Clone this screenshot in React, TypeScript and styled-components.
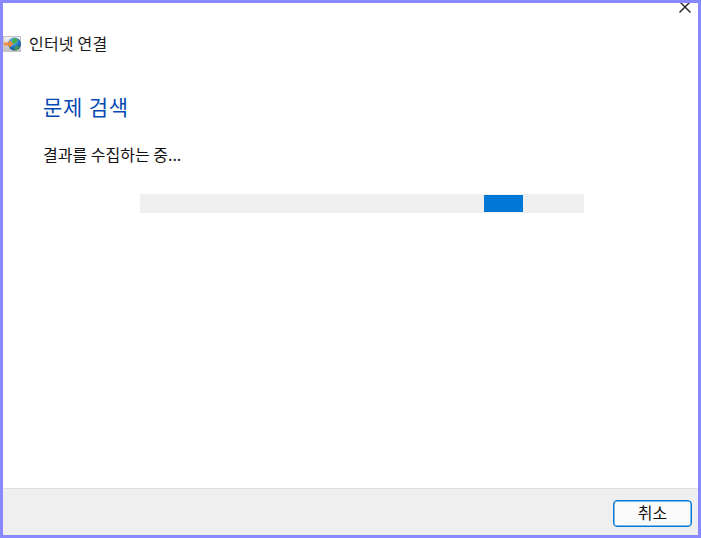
import React from "react";
import styled, { createGlobalStyle } from "styled-components";

const Global = createGlobalStyle`
  html, body { margin: 0; padding: 0; background: #fff; }
  body { font-family: "Noto Sans CJK KR", "Liberation Sans", sans-serif; }
`;

const Frame = styled.div`
  box-sizing: border-box;
  width: 701px;
  height: 538px;
  border: 3px solid #8888ff;
  background: #fff;
  display: flex;
  flex-direction: column;
  position: relative;
  overflow: hidden;
`;

const CloseGlyph = styled.svg`
  position: absolute;
  top: -3px;
  right: 6px;
  width: 14px;
  height: 14px;
`;

const Main = styled.main`
  flex: 1;
  display: flex;
  flex-direction: column;
  padding-top: 29px;
`;

const Header = styled.header`
  display: flex;
  align-items: center;
  gap: 8px;
  height: 24px;
`;

const HeaderTitle = styled.span`
  font-size: 16px;
  line-height: 24px;
  padding-bottom: 2px;
  letter-spacing: 0.2px;
  color: #1a1a1a;
`;

const Body = styled.section`
  display: flex;
  flex-direction: column;
  padding: 0 0 0 40px;
`;

const Heading = styled.h1`
  margin: 35px 0 0;
  font-size: 21px;
  font-weight: 400;
  line-height: 30px;
  color: #0649b4;
  letter-spacing: 0.8px;
`;

const Status = styled.p`
  margin: 21px 0 0;
  font-size: 16px;
  line-height: 24px;
  color: #111;
`;

const Track = styled.div`
  box-sizing: border-box;
  width: 444px;
  height: 19px;
  margin: 28px 0 0 97px;
  padding: 1px 0;
  background: #efefef;
`;

const Fill = styled.div`
  width: 39px;
  height: 17px;
  margin-left: 344px;
  background: #0078d7;
`;

const Footer = styled.footer`
  box-sizing: border-box;
  height: 47px;
  border-top: 1px solid #dfdfdf;
  background: #efefef;
  display: flex;
  justify-content: flex-end;
  align-items: flex-start;
  padding: 11px 6px 0 0;
`;

const CancelButton = styled.button`
  box-sizing: border-box;
  width: 79px;
  height: 27px;
  padding: 0 0 2px;
  border: 1px solid #0078d7;
  border-radius: 4px;
  background: #fbfbfb;
  box-shadow: inset 0 0 0 0.5px #0078d7;
  font-family: inherit;
  font-size: 16px;
  line-height: 21px;
  color: #111;
`;

const NetworkIcon = () => (
  <svg width="18" height="16" viewBox="0 0 18 16" aria-hidden="true">
    <defs>
      <radialGradient id="globe" cx="0.4" cy="0.3" r="0.8">
        <stop offset="0" stopColor="#6fc3ee" />
        <stop offset="0.6" stopColor="#1f74b8" />
        <stop offset="1" stopColor="#123f78" />
      </radialGradient>
      <linearGradient id="plate" x1="0" y1="0" x2="0" y2="1">
        <stop offset="0" stopColor="#f2f2f2" />
        <stop offset="1" stopColor="#bdbdbd" />
      </linearGradient>
    </defs>
    <rect x="0" y="0" width="18" height="16" fill="url(#plate)" />
    <rect x="0.500" y="0.500" width="17" height="15" fill="none" stroke="#c4c4c4" />
    <circle cx="11.500" cy="8" r="6.500" fill="url(#globe)" />
    <path d="M9 3.500l3-1.500 2.500 1-1 3.500-3 1.500-1.500-2z" fill="#4bb04a" />
    <path d="M11.500 11.500l3-1.500 1.500 1-2 3.500-2.500-1z" fill="#3d9a44" />
    <path d="M1 6.500h5V4l4.500 4L6 12V9.500H1z" fill="#ee8a3c" />
  </svg>
);

export default function App() {
  return (
    <>
      <Global />
      <Frame>
        <CloseGlyph viewBox="0 0 14 14" aria-hidden="true">
          <path d="M1.500 1.500l11 11M12.500 1.500l-11 11" stroke="#222" strokeWidth="1.400" fill="none" />
        </CloseGlyph>
        <Main>
          <Header>
            <NetworkIcon />
            <HeaderTitle>인터넷 연결</HeaderTitle>
          </Header>
          <Body>
            <Heading>문제 검색</Heading>
            <Status>결과를 수집하는 중...</Status>
            <Track>
              <Fill />
            </Track>
          </Body>
        </Main>
        <Footer>
          <CancelButton type="button">취소</CancelButton>
        </Footer>
      </Frame>
    </>
  );
}
